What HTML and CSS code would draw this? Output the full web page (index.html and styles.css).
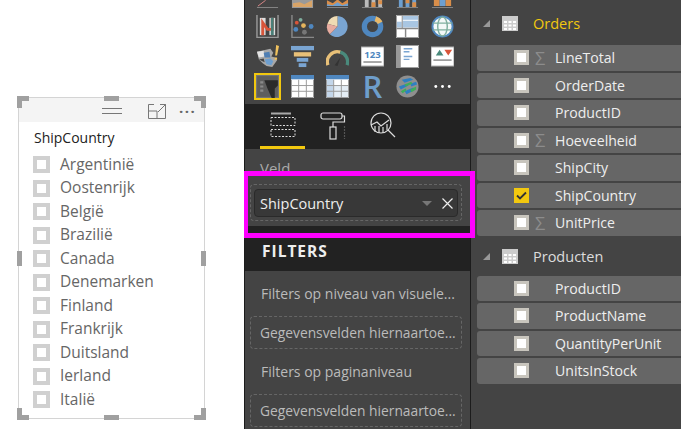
FILE: index.html
```html
<!DOCTYPE html>
<html lang="en">
<head>
<meta charset="UTF-8">
<meta name="viewport" content="width=device-width, initial-scale=1.0">
<title>ShipCountry slicer</title>
<link rel="stylesheet" href="styles.css">
</head>
<body>

<div class="page">

  <!-- Slicer op het canvas -->
  <section class="canvas">
    <div class="slicer">
      <span class="handle h-tl"></span><span class="handle h-tl2"></span>
      <span class="handle h-tr"></span><span class="handle h-tr2"></span>
      <span class="handle h-bl"></span><span class="handle h-bl2"></span>
      <span class="handle h-br"></span><span class="handle h-br2"></span>
      <span class="handle h-t"></span><span class="handle h-b"></span>
      <span class="handle h-l"></span><span class="handle h-r"></span>

      <div class="slicer-head">
        <span class="grip"></span>
        <svg class="focus" width="18" height="15" viewBox="0 0 18 15">
          <path d="M.5 7V.5H6M12 .5H17.500V14.500H.5V7H9V14.500M10 8L17 1M12.500 .5H17.500V5.500" fill="none" stroke="#777" stroke-width="1"/>
        </svg>
        <span class="more">···</span>
      </div>
      <div class="slicer-title">ShipCountry</div>
      <ul class="slicer-list">
        <li><i></i>Argentinië</li>
        <li><i></i>Oostenrijk</li>
        <li><i></i>België</li>
        <li><i></i>Brazilië</li>
        <li><i></i>Canada</li>
        <li><i></i>Denemarken</li>
        <li><i></i>Finland</li>
        <li><i></i>Frankrijk</li>
        <li><i></i>Duitsland</li>
        <li><i></i>Ierland</li>
        <li><i></i>Italië</li>
      </ul>
    </div>
  </section>

  <!-- Visualisaties -->
  <section class="viz">
    <div class="gallery">
      <div class="gallery-grid">
        <!-- rij 1, grotendeels afgesneden -->
        <svg viewBox="0 0 24 24"><path d="M1 23.500H23" stroke="#888" fill="none"/><path d="M2 22L10 16" stroke="#d88" fill="none"/></svg>
        <svg viewBox="0 0 24 24"><rect x="1" y="10" width="22" height="14" fill="#999"/><path d="M2 23V19L9 18L14 20L22 16V23Z" fill="#d8a468"/></svg>
        <svg viewBox="0 0 24 24"><path d="M1 23.500H23" stroke="#888"/><path d="M1 22V16L7 19L12 15L17 19L23 15V22Z" fill="#d98e4a"/><path d="M1 22V20L7 21L12 18L17 21L23 19V22Z" fill="#6d9fd0"/></svg>
        <svg viewBox="0 0 24 24"><path d="M1 23.500H23" stroke="#888"/><path d="M4 14H8V23H4ZM11 14H15V23H11ZM18 14H22V23H18Z" fill="#bbb"/><path d="M11 18H15V23H11ZM18 16H22V20H18Z" fill="#d98e4a"/></svg>
        <svg viewBox="0 0 24 24"><path d="M1 23.500H23" stroke="#888"/><path d="M3 14H7V23H3ZM10 14H14V23H10ZM17 14H21V23H17Z" fill="#6d9fd0"/><path d="M10 14H14V19H10ZM17 18H21V23H17Z" fill="#d98e4a"/></svg>
        <svg viewBox="0 0 24 24"><path d="M1 23.500H23" stroke="#888"/><path d="M3 15H9V22H3ZM15 15H21V22H15Z" fill="#d98e4a"/><path d="M9 15H15V22H9Z" fill="#6d9fd0"/></svg>

        <!-- rij 2 -->
        <svg viewBox="0 0 24 24"><path d="M1 0V24M23 0V24M1 23.500H23" stroke="#999" stroke-width="1.500" fill="none"/><rect x="4" y="3" width="6" height="18" fill="#ddd"/><rect x="14" y="3" width="6" height="18" fill="#ddd"/><path d="M7 21V8L12 15H17V3" stroke="#d8553a" stroke-width="3" fill="none"/><path d="M17 3V21" stroke="#4a7f78" stroke-width="3" fill="none"/></svg>
        <svg viewBox="0 0 24 24"><path d="M1 0V23.500H24" stroke="#888" stroke-width="1.500" fill="none"/><circle cx="10" cy="5" r="2" fill="#7fae9e"/><circle cx="6" cy="8" r="2" fill="#d8553a"/><circle cx="13" cy="11" r="2.500" fill="#e4b45c"/><circle cx="21" cy="12" r="2.500" fill="#4f87bf"/><circle cx="5" cy="15" r="2.500" fill="#4f87bf"/><circle cx="14" cy="18" r="2.500" fill="#777"/></svg>
        <svg viewBox="0 0 24 24"><path d="M12 12V1A11 11 0 1 1 4 20Z" fill="#7aa5d2"/><path d="M12 12L1.500 9A11 11 0 0 1 12 1Z" fill="#f0dcb4"/><path d="M12 12L4 20A11 11 0 0 1 1.500 9Z" fill="#e8aca0"/></svg>
        <svg viewBox="0 0 24 24"><circle cx="12" cy="12" r="8.500" fill="none" stroke="#4f87bf" stroke-width="5.500"/><path d="M15 4A8.500 8.500 0 0 1 20 8" fill="none" stroke="#e8b868" stroke-width="5.500"/></svg>
        <svg viewBox="0 0 24 24"><rect width="24" height="24" fill="#fff"/><rect x="7" y="1" width="16" height="4" fill="#a9c6e2"/><rect x="7" y="6" width="16" height="7" fill="#a9c6e2"/><rect x="1" y="7" width="5" height="6" fill="#a9c6e2"/><path d="M0 14H24M10 14V24" stroke="#888" stroke-width="1.500"/><path d="M6.500 0V14" stroke="#888"/><path d="M.5 .5H23.500V23.500H.5Z" fill="none" stroke="#999"/></svg>
        <svg viewBox="0 0 24 24"><circle cx="12" cy="12" r="10.500" fill="#f3f8f8" stroke="#4f87bf" stroke-width="2"/><path d="M2 8.500H22M2 15.500H22" stroke="#7fae9e" stroke-width="1.500"/><ellipse cx="12" cy="12" rx="5" ry="10" fill="none" stroke="#7fae9e" stroke-width="1.500"/></svg>

        <!-- rij 3 -->
        <svg viewBox="0 0 24 24"><path d="M1 7L15 4L18 8L16 12L20 13L22 16L17 23L11 22L7 19L3 15Z" fill="#a8a8a8"/><path d="M1 7L8 6L9 12L3 13Z" fill="#e4e4e4"/><path d="M8 8L14 7L15 13L9 13Z" fill="#4f7fb4"/><path d="M9 15L15 14L18 17L16 21L11 20Z" fill="#6d9fd0"/><path d="M3 15L8 14L9 18Z" fill="#444"/><path d="M21 0L24 1L22 11L20 11ZM19.500 13H22V15.500H19.500Z" fill="#f0c25e"/></svg>
        <svg viewBox="0 0 24 24"><rect y="1" width="24" height="4.500" fill="#7aa5d2"/><rect x="3" y="7.500" width="18" height="4.500" fill="#e8c078"/><rect x="6" y="13.500" width="12" height="4" fill="#7aa5d2"/><rect x="8" y="19" width="8" height="4" fill="#7aa5d2"/></svg>
        <svg viewBox="0 0 24 24"><path d="M2 21A10.500 10.500 0 0 1 15 7.500" fill="none" stroke="#e8c078" stroke-width="3.500"/><path d="M15 7.500A10.500 10.500 0 0 1 22 21" fill="none" stroke="#4a8a7c" stroke-width="3.500"/><path d="M9 21L15 13L12 22Z" fill="#333"/></svg>
        <svg viewBox="0 0 24 24"><rect y="2" width="24" height="20" fill="#fff" stroke="#999"/><text x="12" y="13.500" class="card-num">123</text><rect x="2.500" y="17" width="19" height="1.500" fill="#888"/></svg>
        <svg viewBox="0 0 24 24"><rect width="24" height="24" fill="#fff"/><rect width="5" height="24" fill="#999"/><path d="M.5 .5H23.500V23.500H.5Z" fill="none" stroke="#999"/><path d="M8 4H17M8 7H14M8 12H17M8 15H14" stroke="#7aa5d2" stroke-width="1.500"/></svg>
        <svg viewBox="0 0 24 24"><rect y="2" width="24" height="20" fill="#fff" stroke="#999"/><path d="M5 11L9 5L13 11Z" fill="#4a8a7c"/><path d="M14 5H22L18 11Z" fill="#d8553a"/><rect x="2.500" y="15" width="19" height="1.500" fill="#888"/></svg>

        <!-- rij 4 -->
        <svg class="selected" viewBox="0 0 26 26"><rect x="1" y="1" width="24" height="24" fill="#5e5e5e" stroke="#f2c80f" stroke-width="2"/><rect x="2.500" y="2.500" width="21" height="21" fill="none" stroke="#777"/><path d="M6 8H9V10H6ZM6 12H9V14H6ZM6 16H9V18H6Z" fill="#8a8a8a"/><path d="M10 7H23V12L20 15V24H17L13 15Z" fill="#2a2a2a"/></svg>
        <svg viewBox="0 0 24 24"><rect width="24" height="24" fill="#fff"/><rect width="24" height="4.500" fill="#4f87bf"/><path d="M.5 5V23.500H23.500V5M0 11H24M0 17H24M8 5V24M16 5V24" fill="none" stroke="#999"/></svg>
        <svg viewBox="0 0 24 24"><rect width="24" height="24" fill="#fff"/><rect y="5" width="8" height="19" fill="#c3d6ea"/><rect x="8" y="11" width="16" height="13" fill="#e4edf5"/><rect width="24" height="4.500" fill="#4f87bf"/><path d="M.5 5V23.500H23.500V5M0 11H24M0 17H24M8 5V24M16 5V24" fill="none" stroke="#999"/></svg>
        <span class="r-letter">R</span>
        <svg viewBox="0 0 24 24"><circle cx="12" cy="12" r="11.500" fill="#8f8f8f"/><path d="M6 5L15 3L18 5L9 8ZM3 12L11 9L13 11L5 15ZM15 9L21 7L22 10L16 12ZM9 17L18 13L19 16L11 20Z" fill="#2e7fc2"/><path d="M9 10L16 7L17 9L10 12ZM5 17L10 14L11 16L7 19ZM15 15L21 12L21 15L16 18Z" fill="#3fae5a"/></svg>
        <svg viewBox="0 0 24 24"><circle cx="5" cy="12" r="1.500" fill="#fff"/><circle cx="12" cy="12" r="1.500" fill="#fff"/><circle cx="19" cy="12" r="1.500" fill="#fff"/></svg>
      </div>
    </div>

    <div class="tabs">
      <div class="tab active">
        <svg width="26" height="26" viewBox="0 0 26 26" fill="none" stroke="#ddd"><path d="M1 1.500H21" stroke-width="2" stroke="#aaa"/><path d="M1 5.500H25V13.500H1Z M1 17.500H25V24.500H1Z" stroke-dasharray="2 1.500"/></svg>
      </div>
      <div class="tab">
        <svg width="26" height="28" viewBox="0 0 26 28" fill="none" stroke="#ddd" stroke-width="1.200"><rect x="1" y="1" width="21" height="6" rx="2"/><path d="M22 4H24.500V10H13V15"/><rect x="10" y="15" width="6" height="12"/><path d="M24.500 14V27" stroke="#555" stroke-dasharray="2 1"/></svg>
      </div>
      <div class="tab">
        <svg width="26" height="28" viewBox="0 0 26 28" fill="none" stroke="#ddd" stroke-width="1.200"><circle cx="11" cy="11" r="10"/><path d="M18 18L25 25M1 13L7 10L11 14L19 8" /><path d="M5 14V20M9 14V21M13 15V21M17 12V18"/></svg>
      </div>
    </div>

    <div class="well-block">
      <div class="well-label">Veld</div>
      <div class="well-zone">
        <div class="well-field">
          <span class="well-name">ShipCountry</span>
          <span class="well-caret"></span>
          <svg class="well-x" width="11" height="11" viewBox="0 0 11 11"><path d="M.5 .5L10.500 10.500M10.500 .5L.5 10.500" stroke="#eee" stroke-width="1.200"/></svg>
        </div>
      </div>
    </div>

    <div class="filters-head">FILTERS</div>

    <div class="filters">
      <div class="filter-label">Filters op niveau van visuele...</div>
      <div class="drop">Gegevensvelden hiernaartoe...</div>
      <div class="filter-label">Filters op paginaniveau</div>
      <div class="drop">Gegevensvelden hiernaartoe...</div>
    </div>
  </section>

  <!-- Velden -->
  <section class="fields">
    <div class="group-head first active">
      <span class="tri"></span>
      <svg class="tbl" width="16" height="15" viewBox="0 0 16 15"><rect width="16" height="15" fill="#ccc"/><path d="M2 5H5V7H2ZM6.500 5H9.500V7H6.500ZM11 5H14V7H11ZM2 8.500H5V10.500H2ZM6.500 8.500H9.500V10.500H6.500ZM11 8.500H14V10.500H11ZM2 12H5V14H2ZM6.500 12H9.500V14H6.500ZM11 12H14V14H11Z" fill="#fff"/></svg>
      <span>Orders</span>
    </div>
    <div class="rows">
      <div class="row"><i class="box"></i><b class="sigma">Σ</b><span>LineTotal</span></div>
      <div class="row"><i class="box"></i><b class="sigma"></b><span>OrderDate</span></div>
      <div class="row"><i class="box"></i><b class="sigma"></b><span>ProductID</span></div>
      <div class="row"><i class="box"></i><b class="sigma">Σ</b><span>Hoeveelheid</span></div>
      <div class="row"><i class="box"></i><b class="sigma"></b><span>ShipCity</span></div>
      <div class="row"><i class="box checked"><svg width="15" height="15" viewBox="0 0 15 15"><path d="M3 7.500L6 10.500L12 4.500" fill="none" stroke="#333" stroke-width="1.800"/></svg></i><b class="sigma"></b><span>ShipCountry</span></div>
      <div class="row"><i class="box"></i><b class="sigma">Σ</b><span>UnitPrice</span></div>
    </div>
    <div class="group-head">
      <span class="tri"></span>
      <svg class="tbl" width="16" height="15" viewBox="0 0 16 15"><rect width="16" height="15" fill="#ccc"/><path d="M2 5H5V7H2ZM6.500 5H9.500V7H6.500ZM11 5H14V7H11ZM2 8.500H5V10.500H2ZM6.500 8.500H9.500V10.500H6.500ZM11 8.500H14V10.500H11ZM2 12H5V14H2ZM6.500 12H9.500V14H6.500ZM11 12H14V14H11Z" fill="#fff"/></svg>
      <span>Producten</span>
    </div>
    <div class="rows">
      <div class="row"><i class="box"></i><b class="sigma"></b><span>ProductID</span></div>
      <div class="row"><i class="box"></i><b class="sigma"></b><span>ProductName</span></div>
      <div class="row"><i class="box"></i><b class="sigma"></b><span>QuantityPerUnit</span></div>
      <div class="row"><i class="box"></i><b class="sigma"></b><span>UnitsInStock</span></div>
    </div>
  </section>

  <!-- Markering over beide panelen -->
  <div class="highlight"></div>
</div>

</body>
</html>
```

FILE: styles.css
```css
* {
  box-sizing: border-box;
}

html, body {
  margin: 0;
  padding: 0;
  height: 100%;
  background-color: #fff;
  overflow: hidden;
}

body {
  font-family: "Open Sans", "Noto Sans", sans-serif;
}

.page {
  position: relative;
  display: grid;
  grid-template-columns: 244px 226px 211px;
  width: 681px;
  height: 429px;
}

/* Canvas */
.canvas {
  padding: 97px 0 0 18px;
}

.slicer {
  position: relative;
  width: 187px;
  height: 322px;
  border: 1px solid #d4d4d4;
  background-color: #fff;
}

.handle {
  position: absolute;
  background-color: #a0a0a0;
}

.h-tl { top: -2px; left: -2px; width: 12px; height: 5px; }
.h-tl2 { top: -2px; left: -2px; width: 5px; height: 12px; }
.h-tr { top: -2px; right: -2px; width: 12px; height: 5px; }
.h-tr2 { top: -2px; right: -2px; width: 5px; height: 12px; }
.h-bl { bottom: -2px; left: -2px; width: 12px; height: 5px; }
.h-bl2 { bottom: -2px; left: -2px; width: 5px; height: 12px; }
.h-br { bottom: -2px; right: -2px; width: 12px; height: 5px; }
.h-br2 { bottom: -2px; right: -2px; width: 5px; height: 12px; }
.h-t { top: -2px; left: 85px; width: 15px; height: 5px; }
.h-b { bottom: -2px; left: 85px; width: 15px; height: 5px; }
.h-l { top: 153px; left: -2px; width: 5px; height: 15px; }
.h-r { top: 153px; right: -2px; width: 5px; height: 15px; }

.slicer-head {
  display: flex;
  align-items: center;
  height: 24px;
  padding: 2px 6px 0 83px;
  background-color: #f4f4f4;
}

.grip {
  width: 20px;
  height: 6px;
  border-top: 1px solid #777;
  border-bottom: 1px solid #777;
}

.focus {
  margin-left: 26px;
}

.more {
  margin-left: 13px;
  color: #666;
  font-size: 15px;
  font-weight: 700;
  letter-spacing: 1.500px;
  line-height: 1;
}

.slicer-title {
  margin: 6px 0 0 15px;
  color: #222;
  font-size: 14px;
  line-height: 20px;
}

.slicer-list {
  list-style: none;
  margin: 4px 0 0 14px;
  padding: 0;
}

.slicer-list li {
  display: flex;
  align-items: center;
  gap: 10px;
  height: 23.500px;
  color: #666;
  font-size: 15.500px;
}

.slicer-list i {
  width: 17px;
  height: 17px;
  margin-top: 2px;
  border: 4px solid #d0d0d0;
  background-color: #fff;
}

/* Visualisaties */
.viz {
  background-color: #444;
  border-left: 1px solid #1c1c1c;
  height: 429px;
  overflow: hidden;
}

.gallery {
  display: flow-root;
  height: 104px;
}

.gallery-grid {
  display: grid;
  grid-template-columns: repeat(6, 35px);
  grid-auto-rows: 30px;
  margin: -19px 0 0 5px;
  justify-items: center;
  align-items: center;
}

.gallery-grid svg {
  width: 23px;
  height: 23px;
}

.gallery-grid svg.selected {
  width: 27px;
  height: 27px;
}

.card-num {
  font-family: "Open Sans", sans-serif;
  font-size: 10px;
  font-weight: 700;
  fill: #4f87bf;
  text-anchor: middle;
}

.r-letter {
  color: #6e9ecb;
  font-size: 31px;
  font-weight: 600;
  line-height: 30px;
}

.tabs {
  position: relative;
  display: flex;
  height: 45px;
  padding-left: 15px;
  background-color: #222;
}

.tab {
  display: flex;
  justify-content: center;
  width: 45px;
  margin-right: 5px;
  padding-top: 8px;
  border-bottom: 3px solid transparent;
}

.tab.active {
  border-bottom-color: #f2c80f;
}

.well-block {
  height: 77px;
  padding-top: 9px;
}

.well-label {
  padding-left: 15px;
  color: #aaa;
  font-size: 15px;
  line-height: 20px;
}

.well-zone {
  width: 212px;
  height: 37px;
  margin: 6px 0 0 5px;
  padding: 4px 3px;
  border: 1px dashed #666;
  border-radius: 4px;
}

.well-field {
  display: flex;
  align-items: center;
  height: 28px;
  padding: 0 4px 0 5px;
  background-color: #383838;
  border: 1px solid #2a2a2a;
  border-radius: 4px;
}

.well-name {
  flex: 1;
  color: #eee;
  font-size: 14.500px;
}

.well-caret {
  width: 0;
  height: 0;
  margin-right: 10px;
  border-left: 5px solid transparent;
  border-right: 5px solid transparent;
  border-top: 5px solid #777;
}

.filters-head {
  height: 45px;
  padding: 9px 0 0 17px;
  background-color: #222;
  color: #eee;
  font-size: 15.500px;
  font-weight: 700;
  letter-spacing: 1px;
  line-height: 33px;
}

.filters {
  padding: 12px 8px 0 5px;
}

.filter-label {
  height: 22px;
  padding-left: 11px;
  color: #bbb;
  font-size: 14px;
  line-height: 22px;
  white-space: nowrap;
}

.drop {
  height: 33px;
  margin: 11px 0 12px;
  padding-left: 9px;
  border: 1px dashed #666;
  border-radius: 4px;
  color: #bbb;
  font-size: 13.800px;
  line-height: 31px;
  white-space: nowrap;
}

/* Velden */
.fields {
  background-color: #444;
  border-left: 1px solid #1c1c1c;
  padding-left: 6px;
}

.group-head {
  display: flex;
  align-items: center;
  height: 31px;
  margin: 5px 0 4px;
  color: #ddd;
  font-size: 14.500px;
}

.group-head.first {
  margin: 8px 0 6px;
}

.group-head.active {
  color: #f2c80f;
}

.tri {
  width: 0;
  height: 0;
  margin: 0 12px 0 6px;
  border-left: 7px solid transparent;
  border-bottom: 7px solid #999;
}

.tbl {
  margin-right: 15px;
}

.rows {
  display: flex;
  flex-direction: column;
  gap: 2px;
}

.row {
  display: flex;
  align-items: center;
  height: 25.500px;
  padding-left: 37px;
  background-color: #666;
  border-radius: 3px 0 0 3px;
  color: #eee;
  font-size: 14.100px;
}

.box {
  display: block;
  width: 15px;
  height: 15px;
  border: 3px solid #c8c5bd;
  background-color: #fff;
}

.box.checked {
  border: 0;
  background-color: #f2c80f;
}

.sigma {
  width: 26px;
  padding-left: 6px;
  color: #8c8c8c;
  font-size: 18px;
  font-weight: 400;
  line-height: 1;
}

/* Magenta kader */
.highlight {
  position: absolute;
  top: 171px;
  left: 244px;
  width: 231px;
  height: 67px;
  border: 5px solid #ff00ff;
  border-left-width: 4px;
}
```
